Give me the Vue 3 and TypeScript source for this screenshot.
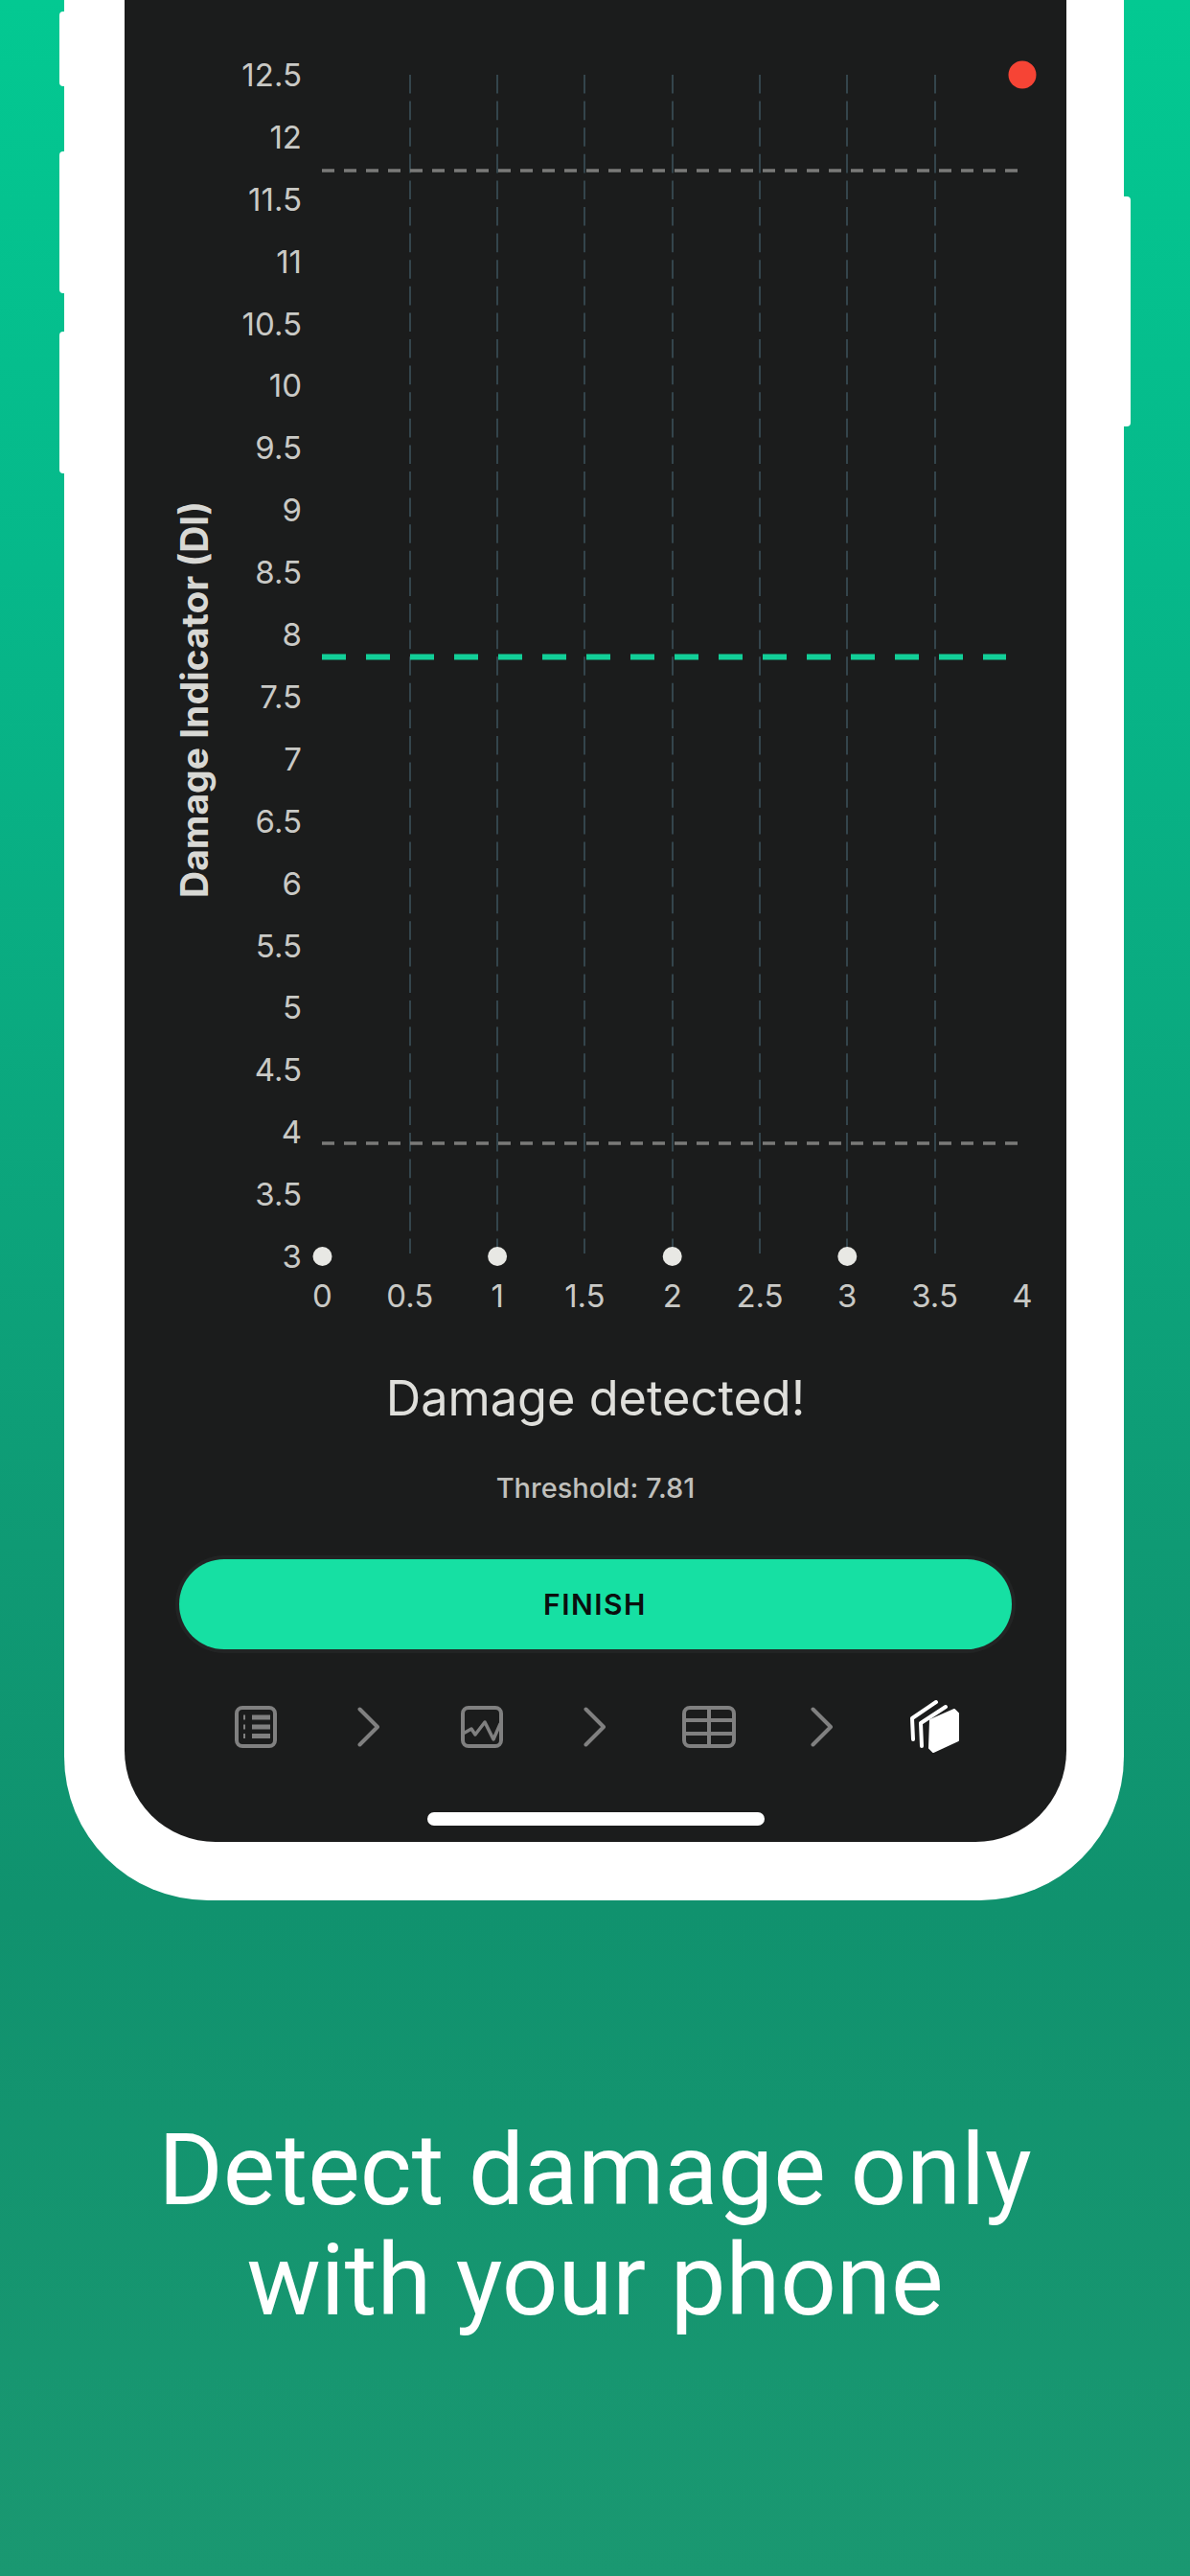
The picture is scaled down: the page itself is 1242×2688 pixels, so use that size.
<template>
  <div class="page">
    <div class="phone">
      <span class="side-btn left b1"></span>
      <span class="side-btn left b2"></span>
      <span class="side-btn left b3"></span>
      <span class="side-btn right b4"></span>

      <div class="screen">
        <svg class="chart" viewBox="130 0 983 1400" width="983" height="1400">
          <line v-for="x in gridXs" :key="x" class="grid-v" :x1="Math.round(xPos(x))" :x2="Math.round(xPos(x))" y1="78" y2="1308" />
          <line class="grid-h" x1="336" x2="1062" y1="178" y2="178" />
          <line class="grid-h" x1="336" x2="1062" y1="1193" y2="1193" />
          <line class="threshold-line" x1="336" x2="1050" y1="685.5" y2="685.5" />

          <text v-for="v in yTicks" :key="v" class="tick" x="315" text-anchor="end" :y="yPos(v) + 12">{{ v }}</text>
          <text v-for="v in xTicks" :key="v" class="tick" text-anchor="middle" :x="xPos(v)" y="1364">{{ v }}</text>
          <text class="axis-title" text-anchor="middle" transform="translate(217 730) rotate(-90)">Damage Indicator (DI)</text>

          <circle v-for="x in [0, 1, 2, 3]" :key="x" class="dot" :cx="xPos(x)" cy="1311" r="10" />
          <circle class="dot-red" cx="1067" cy="78" r="14.5" />
        </svg>

        <div class="message">Damage detected!</div>
        <div class="threshold">Threshold: 7.81</div>

        <button class="finish">FINISH</button>

        <div class="steps">
          <div class="step">
            <svg width="44" height="44" viewBox="0 0 44 44" class="ico">
              <rect x="2" y="2" width="40" height="40" rx="6" />
              <path class="bar" d="M18 12h19M18 22h19M18 31.500h19" />
              <path class="bar" d="M9 12h2M9 22h2M9 31.500h2" />
            </svg>
          </div>
          <div class="step">
            <svg width="24" height="42" viewBox="0 0 24 42" class="ico"><path d="M2.500 2.500 21 21 2.500 39.500" /></svg>
          </div>
          <div class="step">
            <svg width="44" height="44" viewBox="0 0 44 44" class="ico">
              <rect x="2" y="2" width="40" height="40" rx="6" />
              <path class="thin" d="M4 28 11 24 15 30 25 17 34 35 41 19" />
            </svg>
          </div>
          <div class="step">
            <svg width="24" height="42" viewBox="0 0 24 42" class="ico"><path d="M2.500 2.500 21 21 2.500 39.500" /></svg>
          </div>
          <div class="step">
            <svg width="56" height="44" viewBox="0 0 56 44" class="ico">
              <rect x="2" y="2" width="52" height="40" rx="6" />
              <path d="M28 2v40M2 15h52M2 29h52" />
            </svg>
          </div>
          <div class="step">
            <svg width="24" height="42" viewBox="0 0 24 42" class="ico"><path d="M2.500 2.500 21 21 2.500 39.500" /></svg>
          </div>
          <div class="step">
            <svg width="54" height="60" viewBox="0 0 54 60">
              <path class="stack-back" d="M4 43 3 21 28 4M13 50 12 26 38 9" />
              <path class="stack-front" d="M22 23 47 12 51 16V44L25 56 21 52Z" />
            </svg>
          </div>
        </div>

        <div class="home-bar"></div>
      </div>
    </div>

    <h1 class="headline">Detect damage only<br />with your phone</h1>
  </div>
</template>

<script setup lang="ts">
const yTicks: number[] = []
for (let v = 12.5; v >= 3; v -= 0.5) yTicks.push(v)

const xTicks = [0, 0.5, 1, 1.5, 2, 2.5, 3, 3.5, 4]
const gridXs = [0.5, 1, 1.5, 2, 2.5, 3, 3.5]

const xPos = (v: number) => 336.5 + v * 182.6
const yPos = (v: number) => 1311 - (v - 3) * 129.8
</script>

<style>
html,
body {
  margin: 0;
  padding: 0;
}
</style>

<style scoped>
.page {
  width: 1242px;
  height: 2688px;
  overflow: hidden;
  background: linear-gradient(180deg, #03c992 0%, #06b88a 22%, #0f9a74 60%, #10926e 74%, #1a9871 100%);
  font-family: Inter, "Liberation Sans", sans-serif;
}

.phone {
  position: relative;
  box-sizing: border-box;
  width: 1106px;
  margin-left: 67px;
  padding: 0 60px 61px 63px;
  background: #fff;
  border-radius: 0 0 150px 150px;
}

.side-btn {
  position: absolute;
  width: 8px;
  background: #fff;
}

.side-btn.left {
  left: -5px;
  border-radius: 4px 0 0 4px;
}

.side-btn.right {
  right: -7px;
  border-radius: 0 4px 4px 0;
}

.b1 {
  top: 12px;
  height: 78px;
}

.b2 {
  top: 158px;
  height: 148px;
}

.b3 {
  top: 346px;
  height: 148px;
}

.b4 {
  top: 205px;
  height: 240px;
}

.screen {
  display: flex;
  flex-direction: column;
  align-items: center;
  height: 1922px;
  background: #1b1c1c;
  border-radius: 0 0 95px 95px;
}

.chart {
  display: block;
  flex: none;
}

.grid-v {
  stroke: #34454c;
  stroke-width: 2;
  stroke-dasharray: 19.6 8;
}

.grid-h {
  stroke: #7a7a78;
  stroke-width: 3.5;
  stroke-dasharray: 13 10;
}

.threshold-line {
  stroke: #12cf98;
  stroke-width: 6;
  stroke-dasharray: 25 21;
}

.tick {
  fill: #c9c9c5;
  font-size: 33px;
}

.axis-title {
  fill: #d8d8d4;
  font-size: 39px;
  font-weight: 700;
}

.dot {
  fill: #e8e8e4;
}

.dot-red {
  fill: #f64435;
}

.message {
  margin-top: 29px;
  color: #dfdfdb;
  font-size: 50.500px;
  line-height: 60px;
}

.threshold {
  margin-top: 47px;
  color: #c0c0bc;
  font-size: 29px;
  font-weight: 500;
  line-height: 34px;
}

.finish {
  flex: none;
  width: 869px;
  height: 94px;
  margin-top: 57px;
  margin-left: -1px;
  padding: 0;
  border: 0;
  border-radius: 47px;
  background: #16e0a3;
  box-shadow: 0 0 0 4px #222424;
  color: #0b0f0e;
  font-family: inherit;
  font-size: 30px;
  font-weight: 600;
  letter-spacing: 1.500px;
}

.steps {
  display: grid;
  grid-template-columns: repeat(7, 118.3px);
  align-items: center;
  justify-items: center;
  margin-top: 51px;
  height: 60px;
}

.step {
  display: flex;
}

.ico {
  fill: none;
  stroke: #808080;
  stroke-width: 4;
  stroke-linecap: round;
  stroke-linejoin: round;
}

.ico .thin {
  stroke-width: 3.500;
}

.ico .bar {
  stroke-width: 5;
  stroke-linecap: butt;
}

.stack-back {
  fill: none;
  stroke: #fff;
  stroke-width: 4;
  stroke-linecap: round;
  stroke-linejoin: round;
}

.stack-front {
  fill: #fff;
  stroke: #fff;
  stroke-width: 2;
  stroke-linejoin: round;
}

.home-bar {
  width: 352px;
  height: 14px;
  margin-top: auto;
  margin-bottom: 17px;
  border-radius: 7px;
  background: #fff;
}

.headline {
  margin: 224px 0 0;
  color: #fff;
  font-family: Roboto, "Liberation Sans", sans-serif;
  font-size: 103px;
  font-weight: 400;
  line-height: 115px;
  text-align: center;
}
</style>
